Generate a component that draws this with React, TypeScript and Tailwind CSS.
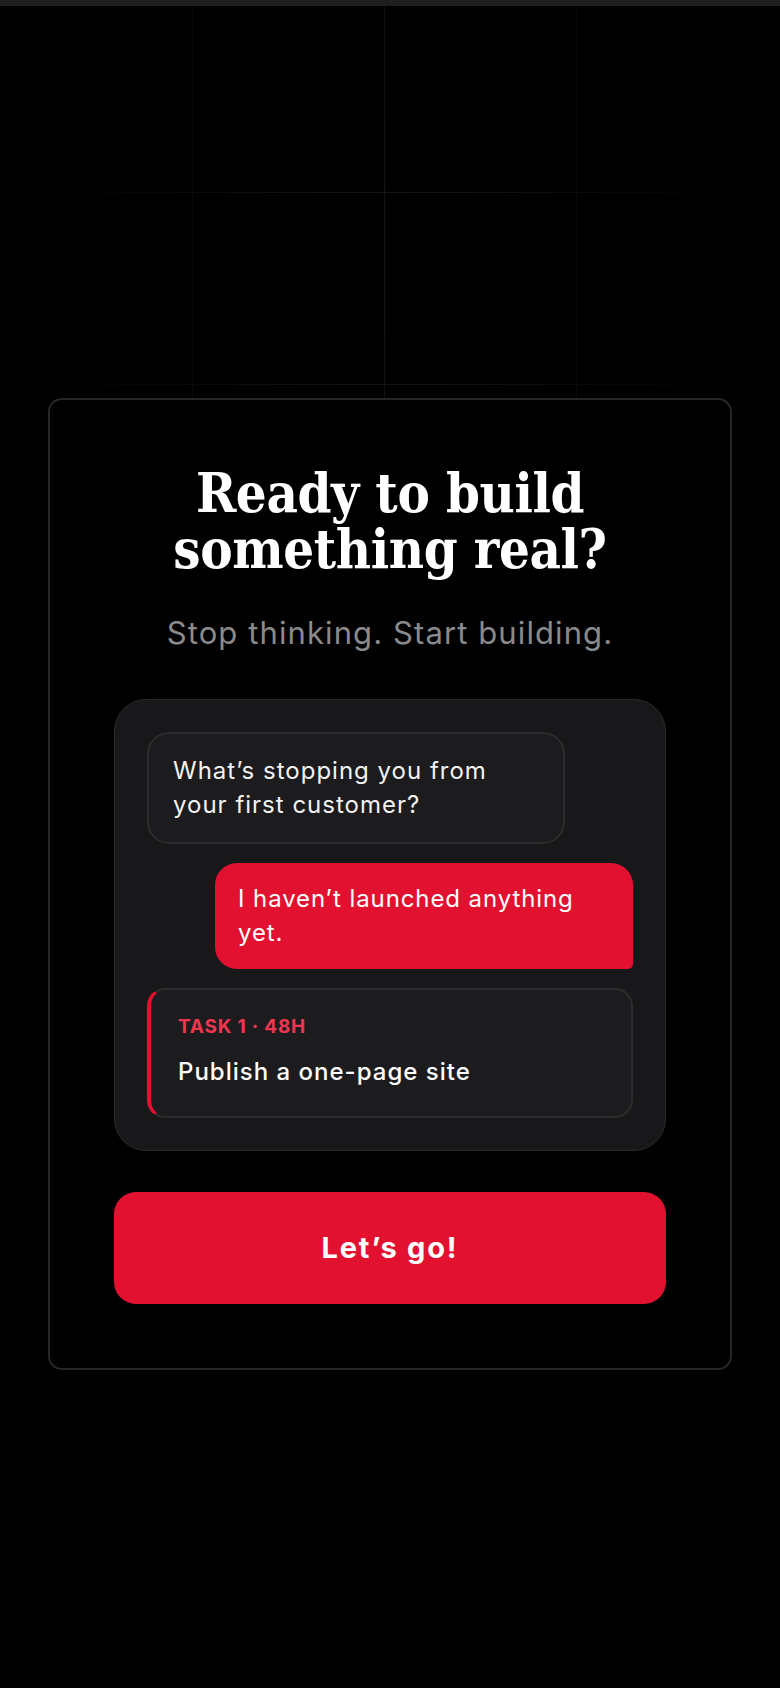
import React from "react";

const sans = "font-['Inter','Noto_Sans',sans-serif]";

export default function App() {
  return (
    <div className={`relative min-h-screen bg-black ${sans} overflow-hidden`}>
      <div className="h-[6px] bg-[#1f1f21]" />
      <div className="pointer-events-none absolute inset-x-0 top-[6px] bottom-0 bg-[linear-gradient(to_right,#161616_1px,transparent_1px),linear-gradient(to_bottom,#161616_1px,transparent_1px)] bg-[size:192px_192px] bg-[position:0px_-6px] [mask-image:radial-gradient(ellipse_45%_40%_at_50%_15%,black,transparent)]" />
      <div className="relative px-[48px] pt-[392px] pb-[320px]">
        <div className="rounded-[14px] border-2 border-[#262628] bg-black px-[64px] pt-[65px] pb-[64px]">
          <h1 className="text-center font-['DejaVu_Serif_Condensed','DejaVu_Serif',serif] text-[54px] font-bold leading-[56px] tracking-[-0.4px] text-white [font-stretch:condensed]">
            Ready to build
            <br />
            something real?
          </h1>
          <p className="mt-[33px] text-center text-[31px] tracking-[1.1px] text-[#8a8a8c]">
            Stop thinking. Start building.
          </p>
          <div className="mt-[42px] flex flex-col gap-[19px] rounded-[32px] border border-[#2a2a2c] bg-[#18181a] p-[32px]">
            <div className="w-[86%] self-start rounded-[22px] border-2 border-[#2c2c2e] bg-[#1c1c1e] px-[24px] py-[20px] text-[24px] leading-[34px] tracking-[1px] text-[#f2f2f2]">
              What’s stopping you from
              <br />
              your first customer?
            </div>
            <div className="w-[86%] self-end rounded-[22px] rounded-br-[5px] bg-[#e31130] px-[23px] py-[19px] text-[24px] leading-[34px] tracking-[0.9px] text-white">
              I haven’t launched anything
              <br />
              yet.
            </div>
            <div className="rounded-[18px] border-2 border-l-4 border-[#2c2c2e] border-l-[#e31130] bg-[#1c1c1e] px-[27px] pt-[25px] pb-[29px]">
              <div className="text-[19px] font-bold leading-[24px] tracking-[0.8px] text-[#ef3550]">
                TASK 1 · 48H
              </div>
              <div className="mt-[18px] text-[24px] font-medium leading-[30px] tracking-[1px] text-white">
                Publish a one-page site
              </div>
            </div>
          </div>
          <button className="mt-[41px] flex h-[112px] w-full items-center justify-center rounded-[22px] bg-[#e31130] text-[29px] font-bold tracking-[1.8px] text-white">
            Let’s go!
          </button>
        </div>
      </div>
    </div>
  );
}
